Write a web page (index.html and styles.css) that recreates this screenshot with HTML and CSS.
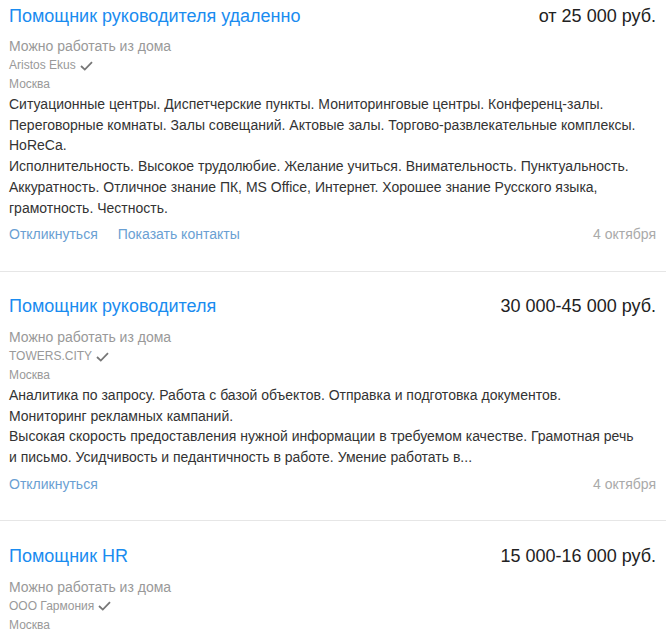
FILE: index.html
```html
<!DOCTYPE html>
<html lang="ru">
<head>
<meta charset="utf-8">
<title>Вакансии</title>
<link rel="stylesheet" href="styles.css">
</head>
<body>
<div class="list">
  <div class="card">
    <div class="head">
      <a class="title" href="#">Помощник руководителя удаленно</a>
      <span class="salary">от 25 000 руб.</span>
    </div>
    <div class="remote">Можно работать из дома</div>
    <div class="company">Aristos Ekus <svg class="check" width="13" height="10" viewBox="0 0 13 10"><polyline points="1,5 4.8,8.6 12,1.2" fill="none" stroke="#777" stroke-width="1.8"/></svg></div>
    <div class="city">Москва</div>
    <div class="desc">Ситуационные центры. Диспетчерские пункты. Мониторинговые центры. Конференц-залы. Переговорные комнаты. Залы совещаний. Актовые залы. Торгово-развлекательные комплексы. HoReCa.<br>Исполнительность. Высокое трудолюбие. Желание учиться. Внимательность. Пунктуальность. Аккуратность. Отличное знание ПК, MS Office, Интернет. Хорошее знание Русского языка, грамотность. Честность.</div>
    <div class="actions">
      <a class="act" href="#">Откликнуться</a>
      <a class="act" href="#">Показать контакты</a>
      <span class="date">4 октября</span>
    </div>
  </div>
  <div class="card">
    <div class="head">
      <a class="title" href="#">Помощник руководителя</a>
      <span class="salary">30 000-45 000 руб.</span>
    </div>
    <div class="remote">Можно работать из дома</div>
    <div class="company">TOWERS.CITY <svg class="check" width="13" height="10" viewBox="0 0 13 10"><polyline points="1,5 4.8,8.6 12,1.2" fill="none" stroke="#777" stroke-width="1.8"/></svg></div>
    <div class="city">Москва</div>
    <div class="desc">Аналитика по запросу. Работа с базой объектов. Отправка и подготовка документов. Мониторинг рекламных кампаний.<br>Высокая скорость предоставления нужной информации в требуемом качестве. Грамотная речь и письмо. Усидчивость и педантичность в работе. Умение работать в...</div>
    <div class="actions">
      <a class="act" href="#">Откликнуться</a>
      <span class="date">4 октября</span>
    </div>
  </div>
  <div class="card">
    <div class="head">
      <a class="title" href="#">Помощник HR</a>
      <span class="salary">15 000-16 000 руб.</span>
    </div>
    <div class="remote">Можно работать из дома</div>
    <div class="company">ООО Гармония <svg class="check" width="13" height="10" viewBox="0 0 13 10"><polyline points="1,5 4.8,8.6 12,1.2" fill="none" stroke="#777" stroke-width="1.8"/></svg></div>
    <div class="city">Москва</div>
  </div>
</div>
</body>
</html>
```

FILE: styles.css
```css
html, body {
  margin: 0;
  padding: 0;
  background: #fff;
}
body {
  font-family: "Liberation Sans", Arial, sans-serif;
  color: #333;
  overflow: hidden;
}
.list {
  display: flex;
  flex-direction: column;
}
.card {
  padding: 23.6px 10px 26.6px 9px;
  border-bottom: 1px solid #e6e6e6;
}
.card:first-child {
  padding-top: 4.6px;
}
.head {
  display: flex;
  justify-content: space-between;
  align-items: baseline;
  height: 22px;
  line-height: 22px;
  font-size: 18px;
}
.title {
  color: #1a8cf0;
  text-decoration: none;
}
.salary {
  color: #222;
}
.remote {
  margin-top: 9.8px;
  font-size: 14px;
  line-height: 20px;
  color: #999;
}
.company {
  font-size: 12px;
  line-height: 18px;
  color: #999;
  display: flex;
  align-items: center;
  gap: 4px;
}
.check {
  display: block;
  margin-top: 1px;
}
.city {
  font-size: 12px;
  line-height: 18px;
  margin-top: 1px;
  color: #999;
}
.desc {
  font-size: 14px;
  line-height: 20.8px;
  margin-top: 0.5px;
  color: #333;
  padding-right: 17px;
}
.actions {
  margin-top: 5.6px;
  display: flex;
  gap: 20px;
  font-size: 14px;
  line-height: 20px;
}
.act {
  color: #6a9fd3;
  text-decoration: none;
}
.date {
  margin-left: auto;
  color: #aaa;
}
```
